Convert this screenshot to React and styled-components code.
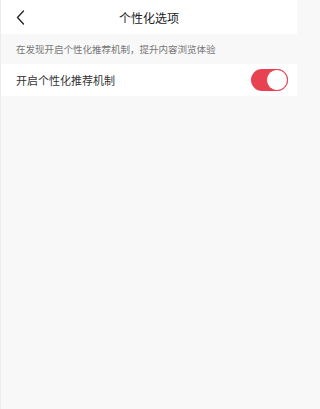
import React, { useState } from "react";
import styled, { createGlobalStyle } from "styled-components";

const Global = createGlobalStyle`
  html, body { margin: 0; padding: 0; height: 100%; }
  body { background: #f8f8f8; font-family: "Noto Sans CJK SC", "Noto Sans", sans-serif; }
  #root { min-height: 100%; }
`;

const Page = styled.div`
  width: 297px;
  min-height: 409px;
  background: #f8f8f8;
  border-left: 1px solid #ececec;
  box-sizing: border-box;
  display: flex;
  flex-direction: column;
`;

const Header = styled.header`
  height: 34px;
  background: #fff;
  display: grid;
  grid-template-columns: 40px 1fr 40px;
  align-items: center;
`;

const Back = styled.button`
  border: 0;
  background: none;
  padding: 0 0 0 15px;
  height: 34px;
  display: flex;
  align-items: center;
  cursor: pointer;
`;

const Title = styled.h1`
  margin: 0;
  font-size: 12px;
  font-weight: 400;
  color: #222;
  text-align: center;
  line-height: 34px;
  position: relative;
  top: 1px;
`;

const Hint = styled.p`
  margin: 0;
  height: 30px;
  padding: 0 15px;
  display: flex;
  align-items: center;
  font-size: 9.5px;
  color: #777;
  line-height: 1;
  padding-top: 2px;
  box-sizing: border-box;
`;

const Row = styled.div`
  height: 32px;
  background: #fff;
  display: flex;
  align-items: center;
  justify-content: space-between;
  padding: 0 9px 0 15px;
`;

const Label = styled.span`
  font-size: 11px;
  color: #333;
  font-weight: 400;
`;

const Toggle = styled.button`
  width: 37px;
  height: 22px;
  border-radius: 11px;
  border: 0;
  padding: 0;
  background: ${(p) => (p.$on ? "#e8414f" : "#e5e5e5")};
  position: relative;
  cursor: pointer;
`;

const Knob = styled.span`
  position: absolute;
  top: 0;
  left: ${(p) => (p.$on ? "15px" : "0")};
  width: 22px;
  height: 22px;
  box-sizing: border-box;
  border-radius: 50%;
  background: #fff;
  border: 1.5px solid ${(p) => (p.$on ? "#e8414f" : "#e5e5e5")};
`;

export default function App() {
  const [on, setOn] = useState(true);
  return (
    <>
      <Global />
      <Page>
        <Header>
          <Back aria-label="返回">
            <svg width="9" height="15" viewBox="0 0 9 15" fill="none">
              <path d="M7.5 1 L1.5 7.5 L7.5 14" stroke="#222" strokeWidth="1.3" strokeLinecap="round" strokeLinejoin="round" />
            </svg>
          </Back>
          <Title>个性化选项</Title>
          <span />
        </Header>
        <Hint>在发现开启个性化推荐机制，提升内容浏览体验</Hint>
        <Row>
          <Label>开启个性化推荐机制</Label>
          <Toggle $on={on} onClick={() => setOn(!on)} aria-pressed={on}>
            <Knob $on={on} />
          </Toggle>
        </Row>
      </Page>
    </>
  );
}
